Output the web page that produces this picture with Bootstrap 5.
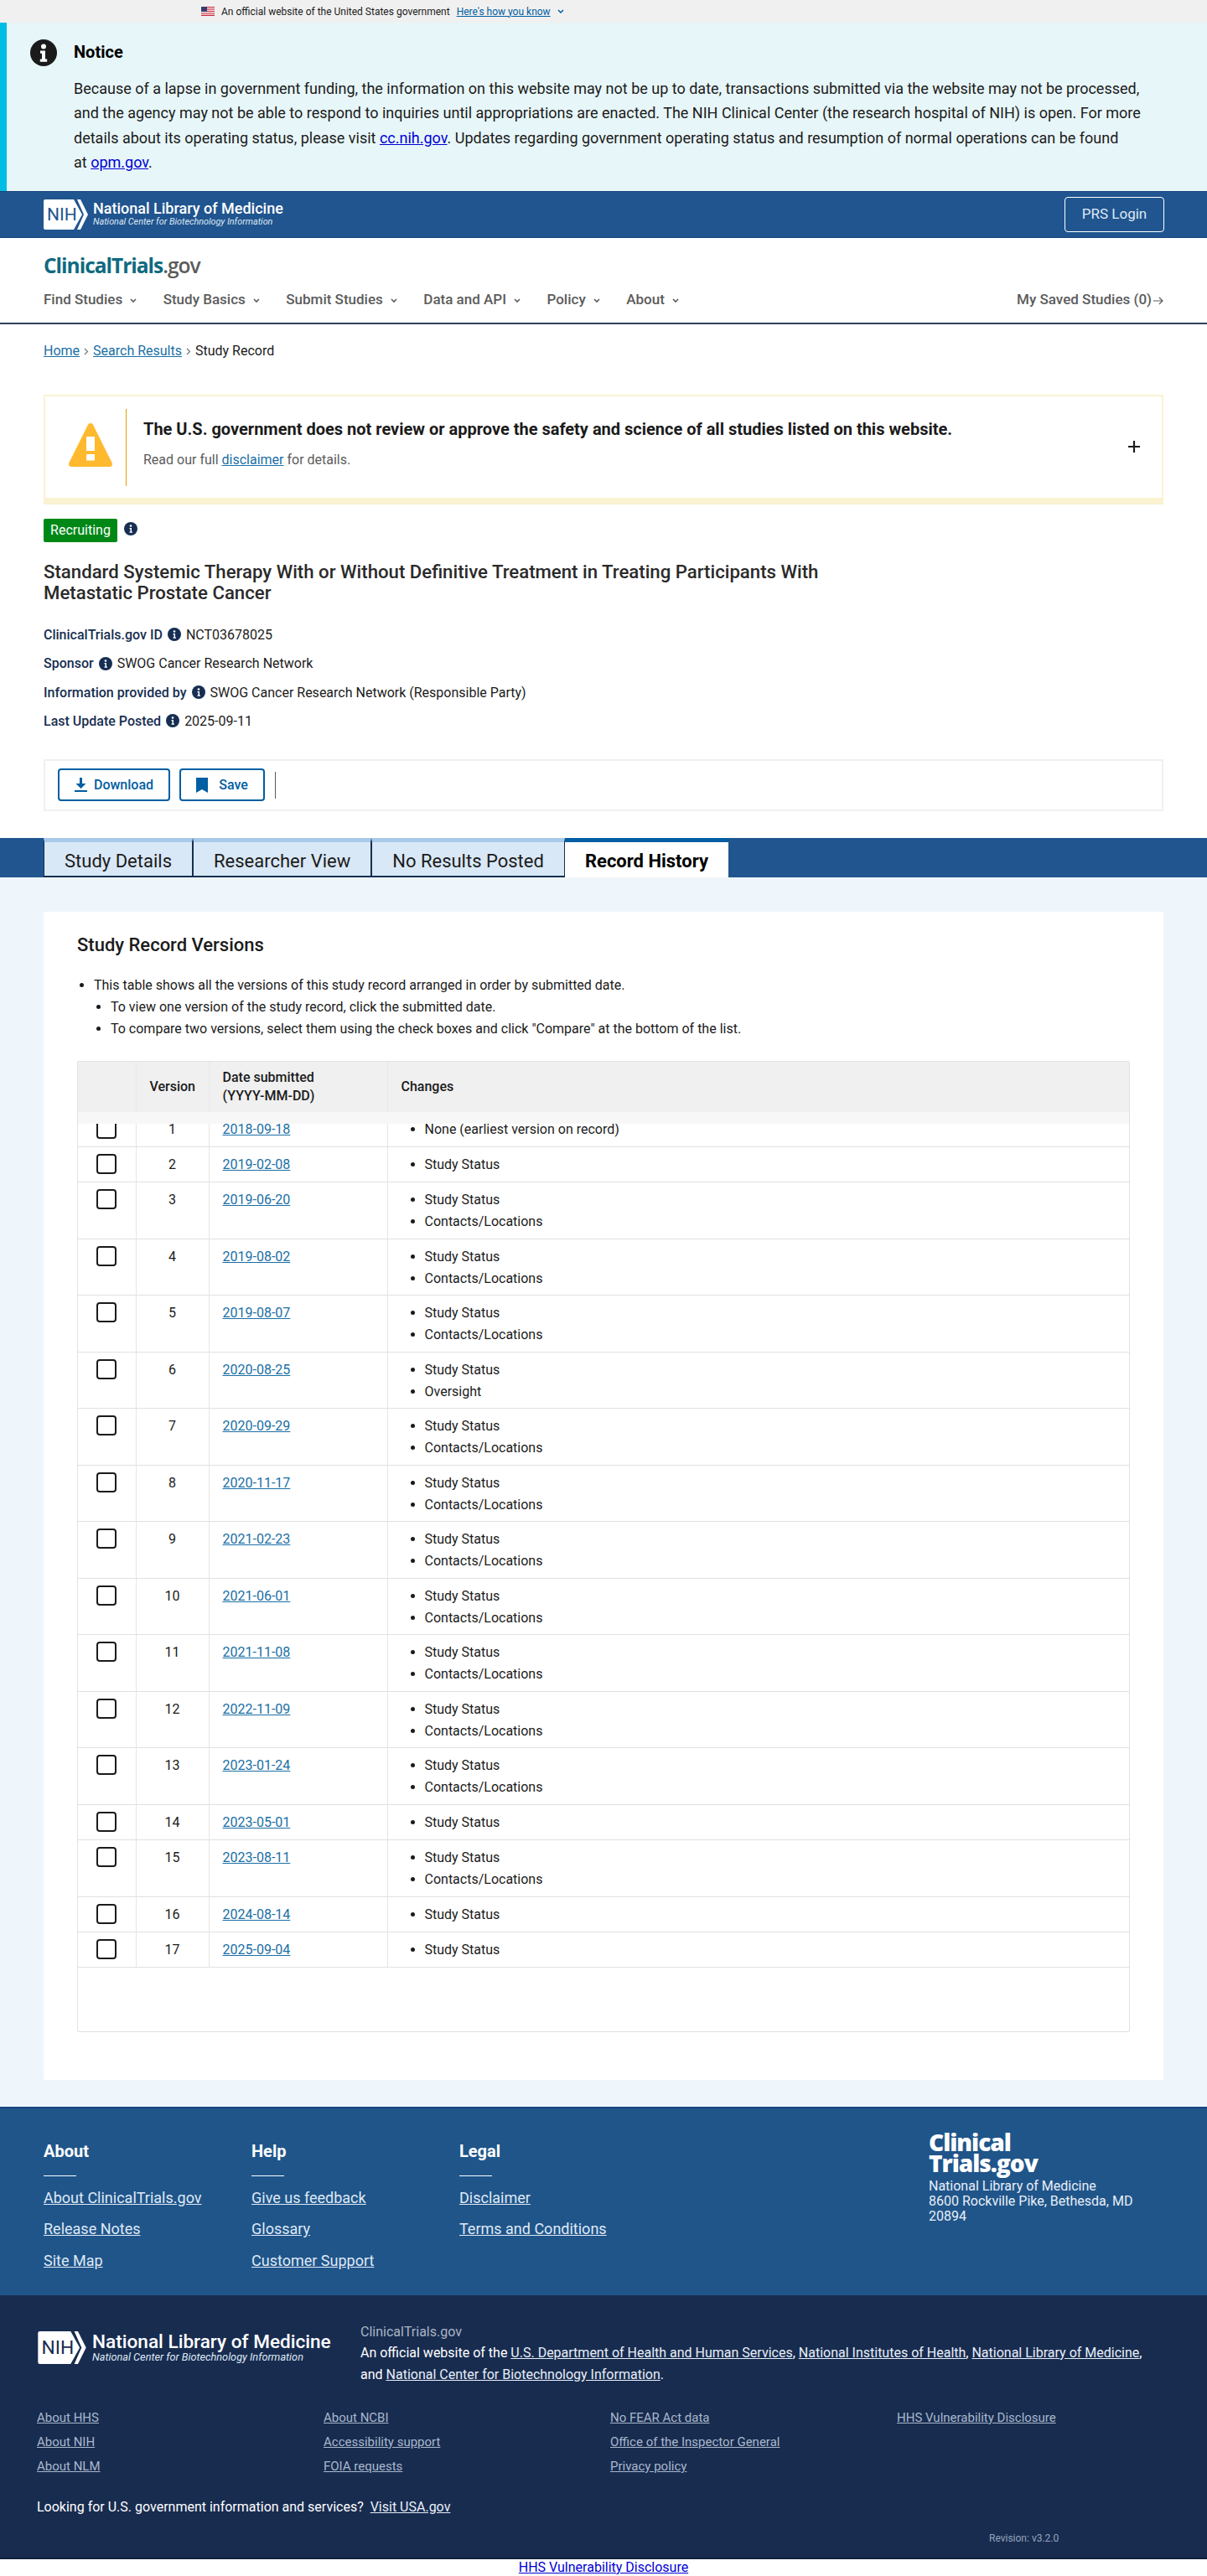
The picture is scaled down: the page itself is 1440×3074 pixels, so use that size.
<!DOCTYPE html>
<html lang="en">
<head>
  <meta charset="UTF-8">
  <title>Study Record Versions | ClinicalTrials.gov</title>
  <link href="https://cdn.jsdelivr.net/npm/bootstrap@5.3.0/dist/css/bootstrap.min.css" rel="stylesheet">
  <style>
    body { font-family: Roboto, "Liberation Sans", sans-serif; font-size: 16px; color: #1b1b1b; background: #fff; }
    a { color: #1a6fa5; }
    .gov-strip { height: 27px; background: #f0f0f0; padding-left: 240px; font-size: 12px; }
    .gov-strip a { color: #005ea2; }
    .notice-box { height: 201px; background: #e7f6f8; border-left: 8px solid #00bde3; padding: 20px 0 0 28px; }
    .notice-box h2 { font-size: 20px; font-weight: 700; line-height: 30px; margin: 0 0 14px; color: #000; }
    .notice-box p { font-size: 18px; line-height: 29.3px; margin: 0; width: 1284px; color: #1b1b1b; }
    .notice-box a { color: #0000d6; }
    .nih-bar { height: 56px; background: #20558f; border-top: 1px solid #1a4480; border-bottom: 1px solid #1a4480; padding: 0 51px 0 52px; }
    .prs-btn { width: 119px; height: 42px; border: 1px solid #fff; border-radius: 4px; color: #dfe9f5; text-decoration: none; font-size: 17px; }
    .nlm-name { font-weight: 500; color: #fff; font-size: 18px; line-height: 18px; white-space: nowrap; }
    .nlm-sub { font-style: italic; color: #dfe9f5; font-size: 10.8px; line-height: 14px; white-space: nowrap; }
    .site-head { height: 103px; border-bottom: 2px solid #2f3f5c; padding: 18px 52px 0; }
    .site-logo { font-family: "Open Sans", sans-serif; font-size: 24.5px; font-weight: 700; line-height: 30px; letter-spacing: -1px; color: #0f6a80; }
    .site-logo span { color: #5c5c5c; font-weight: 600; }
    .site-menu { margin-top: 13px; gap: 31.5px; font-size: 17px; font-weight: 500; color: #5c5c5c; line-height: 24px; }
    .site-menu svg { margin-left: 9px; }
    .crumbs { padding: 20px 52px 0; height: 84px; line-height: 24px; font-size: 16px; }
    .crumbs svg { margin: 0 5px; }
    .warn-box { height: 131px; margin: 0 52px; border: 2px solid #faf3d1; border-bottom-width: 8px; padding: 15px 0 0 28px; }
    .warn-tri { margin-top: 17px; }
    .warn-line { width: 1px; height: 92px; background: #e5a000; margin: 0 20px 0 16px; }
    .warn-box h3 { font-size: 20px; font-weight: 700; line-height: 28px; margin: 10px 0 0; }
    .warn-box p { margin: 11px 0 0; line-height: 24px; color: #5c5c5c; }
    .warn-plus { margin: 38px 26px 0 auto; }
    .study-head { padding: 17px 52px 0; }
    .status-pill { width: 88px; height: 28px; background: #008817; color: #fff; border-radius: 2px; line-height: 28px; text-align: center; }
    .study-head h1 { font-size: 22.2px; font-weight: 500; line-height: 25px; margin: 23px 0 0; width: 960px; color: #2a2a2a; }
    .meta-rows { margin-top: 21px; }
    .meta-row { height: 34.4px; line-height: 34.4px; white-space: nowrap; }
    .meta-row b { font-weight: 500; color: #162e51; }
    .meta-row svg { margin: 0 6px 3px 6px; vertical-align: middle; }
    .action-box { height: 62px; margin: 27.4px 52px 0; border: 2px solid #f0f0f0; padding: 9px 15px; gap: 11px; }
    .outline-btn { height: 39px; border: 2px solid #005ea2; border-radius: 4px; color: #005ea2; font-weight: 500; background: #fff; }
    .dl-btn { width: 134px; }
    .sv-btn { width: 102px; gap: 13px; }
    .btn-sep { width: 1px; height: 32px; background: #5c5c5c; margin-left: 1px; }
    .tab-band { margin-top: 32px; height: 47px; background: #20558f; padding-left: 52px; }
    .rec-tab { height: 47px; padding: 0 24px; font-size: 22px; line-height: 45px; background: #d9e8f6; color: #1b1b1b; border-top: 5px solid #a9c9e8; border-bottom: 2px solid #162e51; border-right: 1px solid #162e51; border-left: 1px solid #162e51; text-decoration: none; }
    .rec-tab.on { background: #fff; font-weight: 700; color: #000; border-top-color: #005ea2; border-bottom-color: #fff; border-left: 0; border-right: 0; }
    .page-zone { height: 1467px; background: #eff6fb; padding: 41px 52px 0; }
    .rec-card { height: 1394px; background: #fff; padding: 24px 40px 0; }
    .rec-card h2 { font-size: 22px; font-weight: 500; line-height: 32px; margin: 0 0 19px; }
    .how-list { padding-left: 20px; margin: 0 0 25px; line-height: 26px; }
    .how-list ul { padding-left: 20px; list-style: disc; }
    .vers-wrap { height: 1159px; border: 1px solid #dfe1e2; border-radius: 2px; position: relative; overflow: hidden; }
    .vers-table { width: 100%; border-collapse: collapse; table-layout: fixed; }
    .vers-table th { height: 60px; background: #f0f0f0; font-weight: 500; padding: 0 16px; line-height: 22px; border-right: 1px solid #e8e8e8; }
    .vers-table th:last-child, .vers-table td:last-child { border-right: 0; }
    .vers-table td { vertical-align: top; padding: 8px 16px 6px; border-right: 1px solid #e6e6e6; border-bottom: 1px solid #dfe1e2; line-height: 26px; }
    .vers-table tr.one td { height: 42px; }
    .vers-table tr.two td { height: 68px; }
    .vers-table tr.two:nth-child(even) td { height: 67px; }
    .vers-table ul { margin: 0; padding-left: 28px; }
    .vers-table .form-check-input { width: 24px; height: 24px; margin: 0 0 0 6px; float: none; display: block; border: 2px solid #1b1b1b; border-radius: 4px; }
    .head-fade { position: absolute; left: 0; right: 0; top: 60px; height: 14px; background: #f7f7f7; }
    .foot-blue { height: 225px; background: #20558a; border-top: 2px solid #1a4480; padding: 37px 52px 0; position: relative; }
    .foot-col { width: 248px; }
    .foot-col h4 { font-size: 20px; font-weight: 700; color: #fff; line-height: 28px; margin: 0; }
    .foot-col h4::after { content: ""; display: block; width: 39px; height: 1px; background: #fff; margin-top: 15px; }
    .foot-col a { display: block; font-size: 18px; line-height: 24px; color: #dfe9f5; margin-bottom: 13.5px; }
    .foot-col a:first-of-type { margin-top: 14px; }
    .foot-addr { position: absolute; left: 1108px; top: 28.5px; color: #e8eff7; line-height: 18px; width: 280px; }
    .foot-logo { font-family: "Open Sans", sans-serif; font-size: 28px; line-height: 25px; font-weight: 800; color: #fff; letter-spacing: -1px; margin-bottom: 5.5px; }
    .foot-dark { height: 315px; background: #182c50; border-bottom: 2px solid #10203c; padding: 43px 44px 0; position: relative; }
    .foot-org { gap: 6px; width: 386px; }
    .foot-org .nlm-name { font-size: 22.6px; line-height: 25px; }
    .foot-org .nlm-sub { font-size: 12.7px; line-height: 12px; }
    .foot-about { margin-top: -10px; line-height: 26px; color: #fff; width: 950px; }
    .foot-about div { color: #a9b4c4; line-height: 22px; margin-bottom: 1px; }
    .foot-about a, .usa-line a { color: #e8eff7; }
    .foot-links { margin-top: 28px; }
    .foot-links div { width: 342px; flex-shrink: 0; }
    .foot-links a { display: block; font-size: 15px; line-height: 20px; margin-bottom: 9px; color: #a9b8cc; }
    .usa-line { margin-top: 18px; color: #fff; line-height: 24px; }
    .rev-line { position: absolute; left: 1180px; top: 281px; font-size: 12px; color: #94a4ba; }
    .disclose { height: 20px; line-height: 20px; text-align: center; }
    .disclose a { color: #0000d6; }
  </style>
</head>
<body>
  <div class="gov-strip d-flex align-items-center">
    <svg width="16" height="11" viewBox="0 0 16 11" class="me-2"><rect width="16" height="11" fill="#fff"/><g fill="#c8313e"><rect width="16" height="1.2"/><rect y="2.4" width="16" height="1.2"/><rect y="4.8" width="16" height="1.2"/><rect y="7.2" width="16" height="1.2"/><rect y="9.6" width="16" height="1.4"/></g><rect width="7" height="6" fill="#3c3b6e"/></svg>
    <span>An official website of the United States government</span>
    <a href="#" class="ms-2">Here's how you know</a>
    <svg width="8" height="6" viewBox="0 0 8 6" class="ms-2"><path d="M1 1l3 3 3-3" fill="none" stroke="#005ea2" stroke-width="1.5"/></svg>
  </div>

  <div class="notice-box d-flex">
    <svg width="32" height="32" viewBox="0 0 32 32" class="flex-shrink-0" style="margin-right:20px"><circle cx="16" cy="16" r="16" fill="#1b1b1b"/><circle cx="16" cy="8.5" r="3" fill="#fff"/><path d="M12 13.5h6v10h2.2v3.2h-8.400v-3.200h2.200v-6.800h-2z" fill="#fff"/></svg>
    <div>
      <h2>Notice</h2>
      <p>Because of a lapse in government funding, the information on this website may not be up to date, transactions submitted via the website may not be processed, and the agency may not be able to respond to inquiries until appropriations are enacted. The NIH Clinical Center (the research hospital of NIH) is open. For more details about its operating status, please visit <a href="#">cc.nih.gov</a>. Updates regarding government operating status and resumption of normal operations can be found at&nbsp;<a href="#">opm.gov</a>.</p>
    </div>
  </div>

  <div class="nih-bar d-flex align-items-center justify-content-between">
    <div class="d-flex align-items-center" style="gap:6px">
      <svg width="53" height="36" viewBox="0 0 53 36"><path d="M2 0h34l10 18-10 18H2a2 2 0 0 1-2-2V2a2 2 0 0 1 2-2z" fill="#fff"/><path d="M40 0h4l9 18-9 18h-4l8-18z" fill="#fff"/><text x="4" y="25" font-family="Roboto, sans-serif" font-size="21" fill="#20558f">NIH</text></svg>
      <div>
        <div class="nlm-name">National Library of Medicine</div>
        <div class="nlm-sub">National Center for Biotechnology Information</div>
      </div>
    </div>
    <a href="#" class="prs-btn d-flex align-items-center justify-content-center">PRS Login</a>
  </div>

  <div class="site-head">
    <div class="site-logo">ClinicalTrials<span>.gov</span></div>
    <div class="site-menu d-flex align-items-center">
      <div>Find Studies<svg width="8" height="6" viewBox="0 0 8 6"><path d="M1 1l3 3 3-3" fill="none" stroke="#5c5c5c" stroke-width="1.6"/></svg></div>
      <div>Study Basics<svg width="8" height="6" viewBox="0 0 8 6"><path d="M1 1l3 3 3-3" fill="none" stroke="#5c5c5c" stroke-width="1.6"/></svg></div>
      <div>Submit Studies<svg width="8" height="6" viewBox="0 0 8 6"><path d="M1 1l3 3 3-3" fill="none" stroke="#5c5c5c" stroke-width="1.6"/></svg></div>
      <div>Data and API<svg width="8" height="6" viewBox="0 0 8 6"><path d="M1 1l3 3 3-3" fill="none" stroke="#5c5c5c" stroke-width="1.6"/></svg></div>
      <div>Policy<svg width="8" height="6" viewBox="0 0 8 6"><path d="M1 1l3 3 3-3" fill="none" stroke="#5c5c5c" stroke-width="1.6"/></svg></div>
      <div>About<svg width="8" height="6" viewBox="0 0 8 6"><path d="M1 1l3 3 3-3" fill="none" stroke="#5c5c5c" stroke-width="1.6"/></svg></div>
      <div class="ms-auto">My Saved Studies (0)<svg width="12" height="10" viewBox="0 0 12 10" style="margin-left:2px"><path d="M0 5h10.500M7 1l4 4-4 4" fill="none" stroke="#5c5c5c" stroke-width="1.200"/></svg></div>
    </div>
  </div>

  <div class="crumbs"><a href="#">Home</a><svg width="6" height="9" viewBox="0 0 6 9"><path d="M1 1l3.500 3.500L1 8" fill="none" stroke="#71767a" stroke-width="1.200"/></svg><a href="#">Search Results</a><svg width="6" height="9" viewBox="0 0 6 9"><path d="M1 1l3.500 3.500L1 8" fill="none" stroke="#71767a" stroke-width="1.200"/></svg>Study Record</div>

  <div class="warn-box d-flex">
    <svg width="52" height="52" viewBox="0 0 52 52" class="flex-shrink-0 warn-tri"><path d="M26 0c1.500 0 2.500.8 3.300 2.400L51.500 47c1.200 2.500 0 5-2.800 5H3.300C.5 52-.7 49.500.5 47L22.700 2.400C23.500.8 24.500 0 26 0z" fill="#ffb92e"/><rect x="21" y="16" width="10" height="17" fill="#fff"/><rect x="21" y="37" width="10" height="7.500" fill="#fff"/></svg>
    <div class="warn-line flex-shrink-0"></div>
    <div>
      <h3>The U.S. government does not review or approve the safety and science of all studies listed on this website.</h3>
      <p>Read our full <a href="#">disclaimer</a> for details.</p>
    </div>
    <svg class="warn-plus flex-shrink-0" width="14" height="14" viewBox="0 0 14 14"><path d="M7 0v14M0 7h14" stroke="#1b1b1b" stroke-width="2.200"/></svg>
  </div>

  <div class="study-head">
    <div class="d-flex align-items-start">
      <div class="status-pill">Recruiting</div>
      <svg width="16" height="16" viewBox="0 0 16 16" class="ms-2 mt-1"><circle cx="8" cy="8" r="8" fill="#162e51"/><circle cx="8" cy="4.500" r="1.300" fill="#fff"/><path d="M6.500 7h2.500v4.500h1v1.200h-3.500v-1.200h1V8.200h-1z" fill="#fff"/></svg>
    </div>
    <h1>Standard Systemic Therapy With or Without Definitive Treatment in Treating Participants With Metastatic Prostate Cancer</h1>
    <div class="meta-rows">
      <div class="meta-row"><b>ClinicalTrials.gov ID</b><svg width="16" height="16" viewBox="0 0 16 16"><circle cx="8" cy="8" r="8" fill="#162e51"/><circle cx="8" cy="4.500" r="1.300" fill="#fff"/><path d="M6.500 7h2.500v4.500h1v1.200h-3.500v-1.200h1V8.200h-1z" fill="#fff"/></svg>NCT03678025</div>
      <div class="meta-row"><b>Sponsor</b><svg width="16" height="16" viewBox="0 0 16 16"><circle cx="8" cy="8" r="8" fill="#162e51"/><circle cx="8" cy="4.500" r="1.300" fill="#fff"/><path d="M6.500 7h2.500v4.500h1v1.200h-3.500v-1.200h1V8.200h-1z" fill="#fff"/></svg>SWOG Cancer Research Network</div>
      <div class="meta-row"><b>Information provided by</b><svg width="16" height="16" viewBox="0 0 16 16"><circle cx="8" cy="8" r="8" fill="#162e51"/><circle cx="8" cy="4.500" r="1.300" fill="#fff"/><path d="M6.500 7h2.500v4.500h1v1.200h-3.500v-1.200h1V8.200h-1z" fill="#fff"/></svg>SWOG Cancer Research Network (Responsible Party)</div>
      <div class="meta-row"><b>Last Update Posted</b><svg width="16" height="16" viewBox="0 0 16 16"><circle cx="8" cy="8" r="8" fill="#162e51"/><circle cx="8" cy="4.500" r="1.300" fill="#fff"/><path d="M6.500 7h2.500v4.500h1v1.200h-3.500v-1.200h1V8.200h-1z" fill="#fff"/></svg>2025-09-11</div>
    </div>
  </div>

  <div class="action-box d-flex align-items-center">
    <button class="outline-btn dl-btn d-flex align-items-center justify-content-center gap-2 p-0"><svg width="15" height="17" viewBox="0 0 15 17"><path d="M6 0h3v7h4.500l-6 6-6-6H6zM0 15h15v2H0z" fill="#005ea2"/></svg>Download</button>
    <button class="outline-btn sv-btn d-flex align-items-center justify-content-center p-0"><svg width="14" height="18" viewBox="0 0 14 18"><path d="M0 0h14v18l-7-4-7 4z" fill="#005ea2"/></svg>Save</button>
    <div class="btn-sep"></div>
  </div>

  <div class="tab-band d-flex">
    <a href="#" class="rec-tab">Study Details</a>
    <a href="#" class="rec-tab">Researcher View</a>
    <a href="#" class="rec-tab">No Results Posted</a>
    <a href="#" class="rec-tab on">Record History</a>
  </div>

  <div class="page-zone">
    <div class="rec-card">
      <h2>Study Record Versions</h2>
      <ul class="how-list">
        <li>This table shows all the versions of this study record arranged in order by submitted date.
          <ul>
            <li>To view one version of the study record, click the submitted date.</li>
            <li>To compare two versions, select them using the check boxes and click "Compare" at the bottom of the list.</li>
          </ul>
        </li>
      </ul>
      <div class="vers-wrap">
        <table class="vers-table">
          <colgroup><col style="width:69px"><col style="width:87px"><col style="width:213px"><col></colgroup>
          <thead>
            <tr><th></th><th class="text-center">Version</th><th>Date submitted<br>(YYYY-MM-DD)</th><th>Changes</th></tr>
          </thead>
          <tbody>
            <tr class="one"><td><input class="form-check-input" type="checkbox" aria-label="Version 1"></td><td class="text-center">1</td><td><a href="#">2018-09-18</a></td><td><ul><li>None (earliest version on record)</li></ul></td></tr>
            <tr class="one"><td><input class="form-check-input" type="checkbox" aria-label="Version 2"></td><td class="text-center">2</td><td><a href="#">2019-02-08</a></td><td><ul><li>Study Status</li></ul></td></tr>
            <tr class="two"><td><input class="form-check-input" type="checkbox" aria-label="Version 3"></td><td class="text-center">3</td><td><a href="#">2019-06-20</a></td><td><ul><li>Study Status</li><li>Contacts/Locations</li></ul></td></tr>
            <tr class="two"><td><input class="form-check-input" type="checkbox" aria-label="Version 4"></td><td class="text-center">4</td><td><a href="#">2019-08-02</a></td><td><ul><li>Study Status</li><li>Contacts/Locations</li></ul></td></tr>
            <tr class="two"><td><input class="form-check-input" type="checkbox" aria-label="Version 5"></td><td class="text-center">5</td><td><a href="#">2019-08-07</a></td><td><ul><li>Study Status</li><li>Contacts/Locations</li></ul></td></tr>
            <tr class="two"><td><input class="form-check-input" type="checkbox" aria-label="Version 6"></td><td class="text-center">6</td><td><a href="#">2020-08-25</a></td><td><ul><li>Study Status</li><li>Oversight</li></ul></td></tr>
            <tr class="two"><td><input class="form-check-input" type="checkbox" aria-label="Version 7"></td><td class="text-center">7</td><td><a href="#">2020-09-29</a></td><td><ul><li>Study Status</li><li>Contacts/Locations</li></ul></td></tr>
            <tr class="two"><td><input class="form-check-input" type="checkbox" aria-label="Version 8"></td><td class="text-center">8</td><td><a href="#">2020-11-17</a></td><td><ul><li>Study Status</li><li>Contacts/Locations</li></ul></td></tr>
            <tr class="two"><td><input class="form-check-input" type="checkbox" aria-label="Version 9"></td><td class="text-center">9</td><td><a href="#">2021-02-23</a></td><td><ul><li>Study Status</li><li>Contacts/Locations</li></ul></td></tr>
            <tr class="two"><td><input class="form-check-input" type="checkbox" aria-label="Version 10"></td><td class="text-center">10</td><td><a href="#">2021-06-01</a></td><td><ul><li>Study Status</li><li>Contacts/Locations</li></ul></td></tr>
            <tr class="two"><td><input class="form-check-input" type="checkbox" aria-label="Version 11"></td><td class="text-center">11</td><td><a href="#">2021-11-08</a></td><td><ul><li>Study Status</li><li>Contacts/Locations</li></ul></td></tr>
            <tr class="two"><td><input class="form-check-input" type="checkbox" aria-label="Version 12"></td><td class="text-center">12</td><td><a href="#">2022-11-09</a></td><td><ul><li>Study Status</li><li>Contacts/Locations</li></ul></td></tr>
            <tr class="two"><td><input class="form-check-input" type="checkbox" aria-label="Version 13"></td><td class="text-center">13</td><td><a href="#">2023-01-24</a></td><td><ul><li>Study Status</li><li>Contacts/Locations</li></ul></td></tr>
            <tr class="one"><td><input class="form-check-input" type="checkbox" aria-label="Version 14"></td><td class="text-center">14</td><td><a href="#">2023-05-01</a></td><td><ul><li>Study Status</li></ul></td></tr>
            <tr class="two"><td><input class="form-check-input" type="checkbox" aria-label="Version 15"></td><td class="text-center">15</td><td><a href="#">2023-08-11</a></td><td><ul><li>Study Status</li><li>Contacts/Locations</li></ul></td></tr>
            <tr class="one"><td><input class="form-check-input" type="checkbox" aria-label="Version 16"></td><td class="text-center">16</td><td><a href="#">2024-08-14</a></td><td><ul><li>Study Status</li></ul></td></tr>
            <tr class="one"><td><input class="form-check-input" type="checkbox" aria-label="Version 17"></td><td class="text-center">17</td><td><a href="#">2025-09-04</a></td><td><ul><li>Study Status</li></ul></td></tr>
          </tbody>
        </table>
        <div class="head-fade"></div>
      </div>
    </div>
  </div>

  <div class="foot-blue d-flex">
    <div class="foot-col"><h4>About</h4><a href="#">About ClinicalTrials.gov</a><a href="#">Release Notes</a><a href="#">Site Map</a></div>
    <div class="foot-col"><h4>Help</h4><a href="#">Give us feedback</a><a href="#">Glossary</a><a href="#">Customer Support</a></div>
    <div class="foot-col"><h4>Legal</h4><a href="#">Disclaimer</a><a href="#">Terms and Conditions</a></div>
    <div class="foot-addr">
      <div class="foot-logo">Clinical<br>Trials.gov</div>
      National Library of Medicine<br>8600 Rockville Pike, Bethesda, MD 20894
    </div>
  </div>

  <div class="foot-dark">
    <div class="d-flex">
      <div class="foot-org d-flex align-items-start flex-shrink-0">
        <svg width="60" height="39" viewBox="0 0 53 36" class="flex-shrink-0"><path d="M2 0h34l10 18-10 18H2a2 2 0 0 1-2-2V2a2 2 0 0 1 2-2z" fill="#fff"/><path d="M40 0h4l9 18-9 18h-4l8-18z" fill="#fff"/><text x="4" y="25" font-family="Roboto, sans-serif" font-size="21" fill="#182c50">NIH</text></svg>
        <div>
          <div class="nlm-name">National Library of Medicine</div>
          <div class="nlm-sub">National Center for Biotechnology Information</div>
        </div>
      </div>
      <div class="foot-about">
        <div>ClinicalTrials.gov</div>
        An official website of the <a href="#">U.S. Department of Health and Human Services</a>, <a href="#">National Institutes of Health</a>, <a href="#">National Library of Medicine</a>, and <a href="#">National Center for Biotechnology Information</a>.
      </div>
    </div>
    <div class="foot-links d-flex">
      <div><a href="#">About HHS</a><a href="#">About NIH</a><a href="#">About NLM</a></div>
      <div><a href="#">About NCBI</a><a href="#">Accessibility support</a><a href="#">FOIA requests</a></div>
      <div><a href="#">No FEAR Act data</a><a href="#">Office of the Inspector General</a><a href="#">Privacy policy</a></div>
      <div><a href="#">HHS Vulnerability Disclosure</a></div>
    </div>
    <div class="usa-line">Looking for U.S. government information and services?&nbsp; <a href="#">Visit USA.gov</a></div>
    <div class="rev-line">Revision: v3.2.0</div>
  </div>
  <div class="disclose"><a href="#">HHS Vulnerability Disclosure</a></div>

  <script src="https://cdn.jsdelivr.net/npm/bootstrap@5.3.0/dist/js/bootstrap.bundle.min.js"></script>
</body>
</html>
